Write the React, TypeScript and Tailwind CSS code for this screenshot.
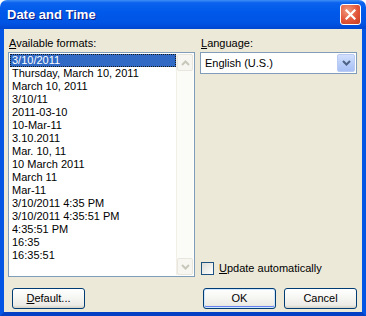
import React from "react";

const items = [
  "3/10/2011",
  "Thursday, March 10, 2011",
  "March 10, 2011",
  "3/10/11",
  "2011-03-10",
  "10-Mar-11",
  "3.10.2011",
  "Mar. 10, 11",
  "10 March 2011",
  "March 11",
  "Mar-11",
  "3/10/2011 4:35 PM",
  "3/10/2011 4:35:51 PM",
  "4:35:51 PM",
  "16:35",
  "16:35:51",
];

function Chevron({ up, color }: { up?: boolean; color: string }) {
  return (
    <svg width="9" height="6" viewBox="0 0 9 6">
      <path
        d={up ? "M1 5 L4.5 1.5 L8 5" : "M1 1 L4.5 4.5 L8 1"}
        fill="none"
        stroke={color}
        strokeWidth="2"
      />
    </svg>
  );
}

function XPButton({ children, isDefault }: { children: React.ReactNode; isDefault?: boolean }) {
  return (
    <div
      className={
        "w-[73px] h-[21px] rounded-[3px] border border-[#003C74] flex items-center justify-center text-[11px] leading-[13px] text-black bg-[linear-gradient(to_bottom,#FFFFFF_0%,#F7F7F4_40%,#ECEBE6_85%,#D6D0C5_100%)] " +
        (isDefault ? "shadow-[inset_0_0_0_1px_#CEE7FF,inset_0_-1px_0_1px_#6982EE]" : "")
      }
    >
      {children}
    </div>
  );
}

export default function App() {
  return (
    <div
      className="w-[366px] h-[316px] flex flex-col rounded-t-[7px] overflow-hidden"
      style={{ fontFamily: '"Liberation Sans", Arial, sans-serif' }}
    >
      {/* Title bar */}
      <div className="h-[29px] shrink-0 flex items-center pl-[7px] pr-[5px] bg-[linear-gradient(to_bottom,#3D8EF6_0%,#0A62EE_10%,#0058EA_45%,#0054E3_80%,#0046D0_100%)]">
        <span className="text-white font-bold text-[13px] leading-[16px] [text-shadow:1px_1px_0_#0A1883] mt-[1px]">
          Date and Time
        </span>
        <div className="ml-auto w-[21px] h-[21px] rounded-[3px] border border-white flex items-center justify-center bg-[radial-gradient(circle_at_35%_30%,#F09A7E_0%,#E2553A_55%,#C63B1E_100%)]">
          <svg width="11" height="11" viewBox="0 0 11 11">
            <path d="M1.5 1.5 L9.5 9.5 M9.5 1.5 L1.5 9.5" stroke="white" strokeWidth="2.2" strokeLinecap="square" />
          </svg>
        </div>
      </div>

      {/* Body */}
      <div className="flex-1 flex flex-col bg-[#ECE9D8] border-x-4 border-b-4 border-x-[#0555E5] border-b-[#0440C4] pl-[4px] pr-[5px] pt-[8px] pb-[3px] text-[11px] leading-[13px] text-black">
        <div className="flex gap-[5px]">
          {/* Left column */}
          <div className="w-[187px] flex flex-col">
            <div className="h-[13px] mb-[2px] pl-[1px]">
              <span className="underline underline-offset-[1px]">A</span>vailable formats:
            </div>
            <div className="h-[225px] border border-[#7F9DB9] bg-white flex p-[1px]">
              <div className="flex-1 flex flex-col">
                {items.map((t, i) => (
                  <div
                    key={t}
                    className={
                      "h-[13px] pl-[2px] whitespace-nowrap " +
                      (i === 0
                        ? "bg-[#316AC5] text-white outline outline-1 outline-dotted outline-offset-[-1px] outline-[#1a1a1a]"
                        : "")
                    }
                  >
                    {t}
                  </div>
                ))}
              </div>
              <div className="w-[17px] flex flex-col bg-[#FBFBF8] border-l border-[#F1EFE6]">
                <div className="h-[17px] rounded-[2px] border border-[#E8E6DD] bg-[#F7F6F1] flex items-center justify-center">
                  <Chevron up color="#C9C7BA" />
                </div>
                <div className="flex-1" />
                <div className="h-[17px] rounded-[2px] border border-[#E8E6DD] bg-[#F7F6F1] flex items-center justify-center">
                  <Chevron color="#C9C7BA" />
                </div>
              </div>
            </div>
          </div>

          {/* Right column */}
          <div className="flex-1 flex flex-col">
            <div className="h-[13px] mb-[2px] pl-[1px]">
              <span className="underline underline-offset-[1px]">L</span>anguage:
            </div>
            <div className="h-[22px] border border-[#7F9DB9] bg-white flex items-center p-[1px]">
              <div className="flex-1 pl-[3px]">English (U.S.)</div>
              <div className="w-[18px] h-full rounded-[2px] border border-[#B9CBF3] bg-[linear-gradient(to_bottom,#D2E0FD_0%,#B6CBF8_60%,#A9C0F5_100%)] flex items-center justify-center">
                <Chevron color="#4D6185" />
              </div>
            </div>
            <div className="flex-1" />
            <div className="flex items-center h-[13px] mb-[2px] pl-[1px]">
              <div className="w-[13px] h-[13px] border border-[#1C5180] bg-[linear-gradient(135deg,#DCDCD7_0%,#FFFFFF_100%)]" />
              <span className="ml-[5px]">
                <span className="underline underline-offset-[1px]">U</span>pdate automatically
              </span>
            </div>
          </div>
        </div>

        {/* Buttons */}
        <div className="flex mt-[11px] items-center">
          <div className="ml-[4px]">
            <XPButton>
              <span>
                <span className="underline underline-offset-[1px]">D</span>efault...
              </span>
            </XPButton>
          </div>
          <div className="ml-auto flex gap-[8px]">
            <XPButton isDefault>OK</XPButton>
            <XPButton>Cancel</XPButton>
          </div>
        </div>
      </div>
    </div>
  );
}
